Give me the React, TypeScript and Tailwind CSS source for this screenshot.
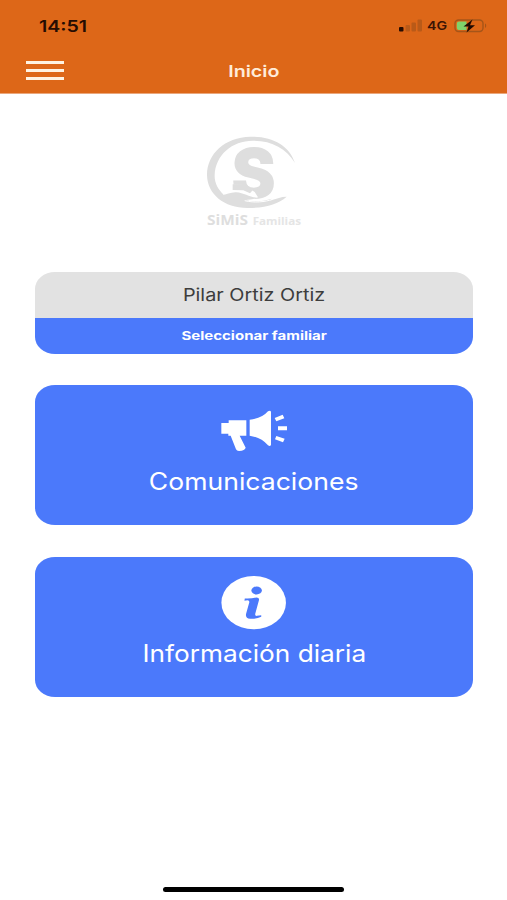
import type { ReactNode } from "react";

// ─── Icons ────────────────────────────────────────────────────────────────────

function BatteryIcon() {
  return (
    <svg viewBox="0 0 34 14" className="w-[34px] h-3.5">
      <rect x="1" y="1" width="28" height="11.5" rx="3.5" fill="none" stroke="#a55519" strokeWidth="1.4" />
      <path d="M5 2.5h7.5v8.5H5a2.2 2.2 0 0 1-2.2-2.2V4.7A2.2 2.2 0 0 1 5 2.5z" fill="#7fd36b" />
      <path d="M31 4.6c1.6.6 1.6 3.8 0 4.4z" fill="#a55519" />
      <path d="M18.5 .5 9.5 7.6h5L12.5 13.5l8.5-7.2h-5z" fill="#1f0a02" />
    </svg>
  );
}

function SignalIcon() {
  return (
    <svg viewBox="0 0 24 13" className="w-6 h-[13px]">
      <rect x="0" y="8" width="4.5" height="4.5" rx="1" fill="#260c02" />
      <rect x="6.5" y="6" width="4.5" height="6.5" rx="1" fill="#b95a18" />
      <rect x="12.5" y="3.5" width="4.5" height="9" rx="1" fill="#b95a18" />
      <rect x="18.5" y="0.5" width="4.5" height="12" rx="1" fill="#b95a18" />
    </svg>
  );
}

function MegaphoneIcon() {
  return (
    <svg viewBox="240 30 204 126" className="w-[68px] h-[42px]" fill="white">
      <path d="M266 61h53v46h-20l18 36q-2 9-20 10-7 0-9-5l-16-41h-7v-6h-21V69h22z" />
      <path d="M329 59q36-3 55-25 8-4 9 2v98q-2 7-9 2-21-24-55-29z" />
      <path d="m404 54 24-10 5 11-24 9zM414 79h27v12h-27zM409 108l25 8-5 11-24-9z" />
    </svg>
  );
}

function InfoIcon() {
  return (
    <svg viewBox="273 31 200 164" className="w-[66px] h-[54px]">
      <ellipse cx="372" cy="112" rx="98" ry="81" fill="white" />
      <ellipse cx="381" cy="75" rx="16" ry="12" fill="#4b79fb" />
      <path
        d="M345 99q20 1 35-3 10 0 8 9l-11 40q-2 8 5 7l13-2v5q-14 7-34 6-15-2-12-15l10-36q0-5-6-5l-9 1z"
        fill="#4b79fb"
      />
    </svg>
  );
}

function Logo() {
  return (
    <svg viewBox="0 0 360 330" className="w-[120px] h-[110px]" fill="#dedede">
      <path d="M303 114C285 60 235 34 169 35 91 37 38 88 39 151c1 57 52 99 124 98 53-1 88-11 115-34-18 0-29 6-44 10-25 7-49 8-71 2l-74-18C72 193 61 173 62 151 64 90 115 47 176 47c58 0 100 23 127 67z" />
      <text
        x="179"
        y="216"
        textAnchor="middle"
        fontFamily="Inter, sans-serif"
        fontWeight="800"
        fontSize="196"
        stroke="#dedede"
        strokeWidth="6"
      >
        S
      </text>
      {/* Hand holding the mark */}
      <path d="M106 179h42l34 22 10 16-26 8-80-14z" fill="white" />
      <path d="M82 210c17-1 28-9 45-8 22 1 40 15 61 16-10 6-24 5-36 8 25 5 58 3 82-5l-20 22-80 2-45-20z" />
      <path d="M116 178l38-1 22 19-8 9-20-9-32-1z" />
      <path d="M152 227c29 7 61 4 84-4" fill="none" stroke="white" strokeWidth="3" />
      <g fontFamily="Open Sans, sans-serif" fontWeight="700">
        <text x="39" y="299" fontSize="42" textLength="123" lengthAdjust="spacingAndGlyphs">
          SiMiS
        </text>
        <text x="176" y="299" fontSize="32" fill="#e5e5e5" textLength="145" lengthAdjust="spacingAndGlyphs">
          Familias
        </text>
      </g>
    </svg>
  );
}

// ─── Tile ─────────────────────────────────────────────────────────────────────

interface TileProps {
  icon: ReactNode;
  label: ReactNode;
}

function Tile({ icon, label }: TileProps) {
  return (
    <button className="flex h-[140px] w-full flex-col items-center rounded-[20px/17px] bg-[#4b79fb] pt-[18px] text-white">
      <span className="flex h-[56px] items-center">{icon}</span>
      <span className="mt-[6px] text-[24px] leading-[34px] whitespace-nowrap">{label}</span>
    </button>
  );
}

// ─── Screen ───────────────────────────────────────────────────────────────────

export default function App() {
  return (
    <div className="flex h-[900px] w-full flex-col bg-white font-[Inter,sans-serif]">
      <header className="h-[94px] border-b border-[#eaa77c] bg-[#dd6718]">
        {/* Status bar */}
        <div className="flex h-[51px] items-center justify-between pr-[19px] pl-[39px]">
          <span className="origin-left scale-x-[1.22] text-base font-semibold text-[#260c02]">14:51</span>
          <div className="flex items-center">
            <SignalIcon />
            <span className="mr-[10px] ml-1 origin-left scale-x-[1.18] text-xs font-semibold text-[#3a1405]">4G</span>
            <BatteryIcon />
          </div>
        </div>

        {/* Title bar */}
        <div className="grid h-[39px] grid-cols-[1fr_auto_1fr] items-center pl-[26px]">
          <button className="flex w-[38px] flex-col gap-[4.5px]" aria-label="Menú">
            <span className="h-[3.5px] w-full bg-[#fff3e2]" />
            <span className="h-[3.5px] w-full bg-[#fff3e2]" />
            <span className="h-[3.5px] w-full bg-[#fff3e2]" />
          </button>
          <h1 className="mr-[25px] scale-x-[1.23] text-base font-semibold text-[#ffecd9]">Inicio</h1>
        </div>
      </header>

      <main className="flex flex-1 flex-col items-center pt-[31px] pr-[34px] pl-[35px]">
        <Logo />

        {/* Family member selector */}
        <section className="mt-[37px] w-full overflow-hidden rounded-[20px/17px] text-center">
          <div className="flex h-[46px] items-center justify-center bg-[#e2e2e2] text-[17px] text-[#3d3d3d]">
            <span className="pt-px scale-x-[1.165]">Pilar Ortiz Ortiz</span>
          </div>
          <button className="flex h-9 w-full items-center justify-center bg-[#4b79fb] text-xs font-bold text-white">
            <span className="scale-x-[1.25]">Seleccionar familiar</span>
          </button>
        </section>

        <nav className="mt-[31px] flex w-full flex-col gap-8">
          <Tile icon={<MegaphoneIcon />} label={<span className="inline-block scale-x-[1.107]">Comunicaciones</span>} />
          <Tile icon={<InfoIcon />} label={<span className="inline-block scale-x-[1.093]">Información diaria</span>} />
        </nav>
      </main>

      {/* Home indicator */}
      <div className="mb-2 h-[5px] w-[181px] self-center rounded-full bg-black" />
    </div>
  );
}
